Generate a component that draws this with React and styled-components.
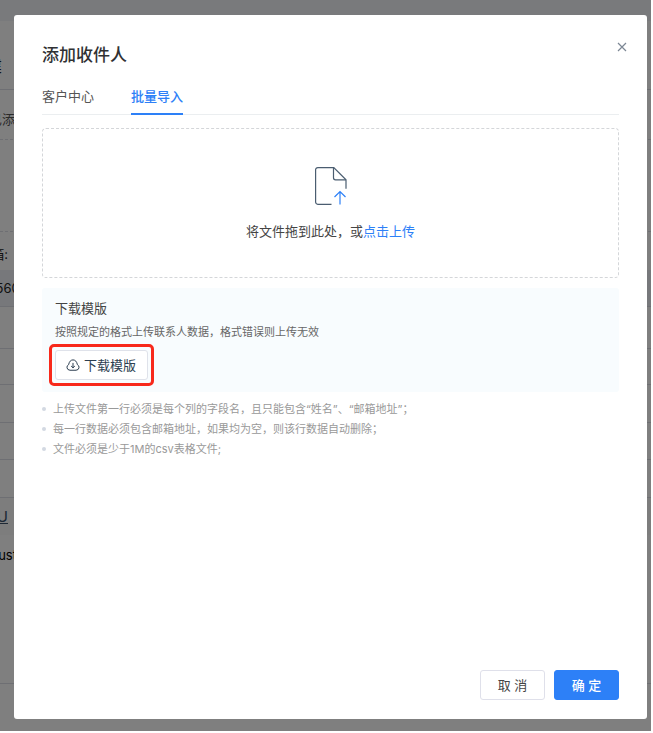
import React, { useState } from "react";
import styled, { createGlobalStyle } from "styled-components";

const GlobalStyle = createGlobalStyle`
  * {
    box-sizing: border-box;
  }
  body {
    margin: 0;
    background-color: white;
    font-family: Inter, "Noto Sans CJK SC", sans-serif;
    font-size: 13px;
    line-height: 20px;
    color: #444;
  }
  button {
    font: inherit;
    cursor: pointer;
  }
`;

const Screen = styled.div`
  display: grid;
  height: 100vh;
  padding: 0 2px 2px 0;
  overflow: hidden;

  & > * {
    grid-area: 1 / 1;
    min-width: 0;
    min-height: 0;
  }
`;

// page under the dialog
const Page = styled.div`
  overflow: hidden;
  background-color: white;
`;

const PageRow = styled.div`
  display: flex;
  align-items: ${(props) => props.$align || "center"};
  height: ${(props) => props.$height}px;
  padding-top: ${(props) => props.$top || 0}px;
  background-color: ${(props) => props.$bg || "transparent"};
  border-bottom: 1px ${(props) => props.$line || "solid"}
    ${(props) => (props.$line === "none" ? "transparent" : "#dcdfe6")};
`;

const PageText = styled.span`
  display: flex;
  justify-content: flex-end;
  width: ${(props) => props.$width || 16}px;
  white-space: nowrap;
  font-size: ${(props) => props.$size || 13}px;
  color: ${(props) => props.$color || "#222"};
  text-decoration: ${(props) => (props.$underline ? "underline" : "none")};
`;

const Mask = styled.div`
  display: flex;
  padding: 15px 4px 12px 14px;
  background-color: rgba(0, 0, 0, 0.5);
`;

const Dialog = styled.section`
  display: flex;
  flex-direction: column;
  flex: 1;
  min-width: 0;
  padding: 26px 28px 19px;
  border-radius: 3px;
  background-color: white;
`;

const Header = styled.header`
  display: flex;
  justify-content: space-between;
  align-items: flex-start;
`;

const Title = styled.h2`
  margin: 2px 0 0;
  font-size: 17px;
  line-height: 24px;
  font-weight: 500;
  color: #303133;
`;

const CloseButton = styled.button`
  display: flex;
  margin: -2px -11px 0 0;
  padding: 3px;
  border: none;
  background: none;
  color: #7c8794;
`;

const Tabs = styled.nav`
  display: flex;
  gap: 37px;
  margin-top: 18px;
  border-bottom: 1px solid #ebeef0;
`;

const Tab = styled.button`
  height: 30px;
  margin-bottom: -1px;
  padding: 0 0 6px;
  border: none;
  border-bottom: 2px solid ${(props) => (props.$active ? "#2d80f7" : "transparent")};
  background: none;
  color: ${(props) => (props.$active ? "#2d80f7" : "#555")};
  font-weight: ${(props) => (props.$active ? 500 : 400)};
`;

const DropArea = styled.div`
  display: flex;
  flex-direction: column;
  align-items: center;
  height: 150px;
  margin-top: 13px;
  padding-top: 37px;
  border: 1px dashed #d4d6d9;
  border-radius: 4px;
`;

const DropText = styled.p`
  margin: 15px 0 0;
`;

const UploadLink = styled.a`
  color: #2d80f7;
  text-decoration: none;
`;

const Template = styled.div`
  margin-top: 10px;
  padding: 10px 13px 6px;
  border-radius: 3px;
  background-color: #f8fcfe;
`;

const TemplateTitle = styled.h3`
  margin: 0;
  font-size: 13px;
  font-weight: 400;
`;

const TemplateText = styled.p`
  margin: 4px 0 2px;
  font-size: 11px;
  color: #666;
`;

const Highlight = styled.div`
  width: fit-content;
  margin-left: -6px;
  padding: 3px;
  border: 3px solid #f8291b;
  border-radius: 5px;
`;

const DownloadButton = styled.button`
  display: flex;
  align-items: center;
  gap: 4px;
  height: 30px;
  padding: 0 11px 0 10px;
  border: 1px solid #dfe2ea;
  border-radius: 3px;
  background-color: white;
  color: #2c3e50;
`;

const Notes = styled.ul`
  margin: 7px 0 0;
  padding: 0;
  list-style: none;
  font-size: 11px;
  color: #999;
`;

const Note = styled.li`
  display: flex;
  align-items: center;
  gap: 7px;

  &::before {
    content: "";
    width: 4px;
    height: 4px;
    border-radius: 50%;
    background-color: #d3d9e2;
  }
`;

const Footer = styled.footer`
  display: flex;
  justify-content: flex-end;
  gap: 9px;
  margin-top: auto;
`;

const Button = styled.button`
  min-width: 65px;
  height: 30px;
  padding: 0;
  border: 1px solid ${(props) => (props.$primary ? "#2d80f7" : "#dfe0ea")};
  border-radius: 3px;
  background-color: ${(props) => (props.$primary ? "#2d80f7" : "white")};
  color: ${(props) => (props.$primary ? "white" : "#444")};
  font-weight: ${(props) => (props.$primary ? 500 : 400)};
`;

const CloseIcon = () => (
  <svg width="10" height="10" viewBox="0 0 10 10" fill="none" stroke="currentColor">
    <path d="M1 1l8 8M9 1L1 9" strokeWidth="1.2" />
  </svg>
);

const FileIcon = () => (
  <svg width="34" height="40" viewBox="0 0 34 40" fill="none" strokeWidth="1.2">
    <path
      d="M17.5 38.3H3.8a2.2 2.2 0 0 1-2.2-2.2V3.8a2.2 2.2 0 0 1 2.2-2.2h16L32 13.8v9"
      stroke="#4a5d70"
    />
    <path d="M19.5 1.6v10.2a2 2 0 0 0 2 2H32" stroke="#4a5d70" />
    <path d="M26 38.6V25.6M20.5 31l5.5-5.5 5.5 5.5" stroke="#2d80f7" />
  </svg>
);

const CloudIcon = () => (
  <svg
    width="14"
    height="14"
    viewBox="0 0 14 14"
    fill="none"
    stroke="currentColor"
    strokeLinecap="round"
    strokeLinejoin="round"
  >
    <path d="M3.6 12.2A2.9 2.9 0 0 1 2.6 6.7C3.2 3.6 4.8 1.9 7 1.9s3.8 1.7 4.4 4.8a2.9 2.9 0 0 1-1 5.5z" />
    <path d="M7 5.3v4.4M5.4 8.3L7 9.8l1.6-1.5" />
  </svg>
);

const tabs = ["客户中心", "批量导入"];

const notes = [
  "上传文件第一行必须是每个列的字段名，且只能包含“姓名”、“邮箱地址”；",
  "每一行数据必须包含邮箱地址，如果均为空，则该行数据自动删除；",
  "文件必须是少于1M的csv表格文件;",
];

const App = () => {
  const [active, setActive] = useState(1);

  return (
    <Screen>
      <GlobalStyle />
      <Page aria-hidden="true">
        <PageRow $height={21} $bg="#f2f5f9" $line="none" />
        <PageRow $height={69} $top={22}>
          <PageText $width={2} $size={17}>建</PageText>
        </PageRow>
        <PageRow $height={50} $top={8} $line="dashed">
          <PageText $width={15} $color="#555">已添</PageText>
        </PageRow>
        <PageRow $height={92} $line="dashed" />
        <PageRow $height={38} $top={6} $line="none">
          <PageText $width={8}>邮箱:</PageText>
        </PageRow>
        <PageRow $height={37} $bg="#eef1f6">
          <PageText $width={24}>156@</PageText>
        </PageRow>
        <PageRow $height={42} />
        <PageRow $height={36} />
        <PageRow $height={38} />
        <PageRow $height={37} />
        <PageRow $height={38} />
        <PageRow $height={37} $bg="#fafafa" $line="none">
          <PageText $width={8} $size={15} $color="#3c526b" $underline>U</PageText>
        </PageRow>
        <PageRow $height={149} $top={10} $align="flex-start">
          <PageText $width={17} $color="#000">Cust</PageText>
        </PageRow>
      </Page>

      <Mask>
        <Dialog role="dialog" aria-labelledby="dialog-title">
          <Header>
            <Title id="dialog-title">添加收件人</Title>
            <CloseButton aria-label="关闭">
              <CloseIcon />
            </CloseButton>
          </Header>

          <Tabs>
            {tabs.map((name, index) => (
              <Tab key={name} $active={index === active} onClick={() => setActive(index)}>
                {name}
              </Tab>
            ))}
          </Tabs>

          <DropArea>
            <FileIcon />
            <DropText>
              将文件拖到此处，或<UploadLink href="#upload">点击上传</UploadLink>
            </DropText>
          </DropArea>

          <Template>
            <TemplateTitle>下载模版</TemplateTitle>
            <TemplateText>按照规定的格式上传联系人数据，格式错误则上传无效</TemplateText>
            <Highlight>
              <DownloadButton>
                <CloudIcon />
                下载模版
              </DownloadButton>
            </Highlight>
          </Template>

          <Notes>
            {notes.map((text) => (
              <Note key={text}>{text}</Note>
            ))}
          </Notes>

          <Footer>
            <Button>取 消</Button>
            <Button $primary>确 定</Button>
          </Footer>
        </Dialog>
      </Mask>
    </Screen>
  );
};

export default App;
